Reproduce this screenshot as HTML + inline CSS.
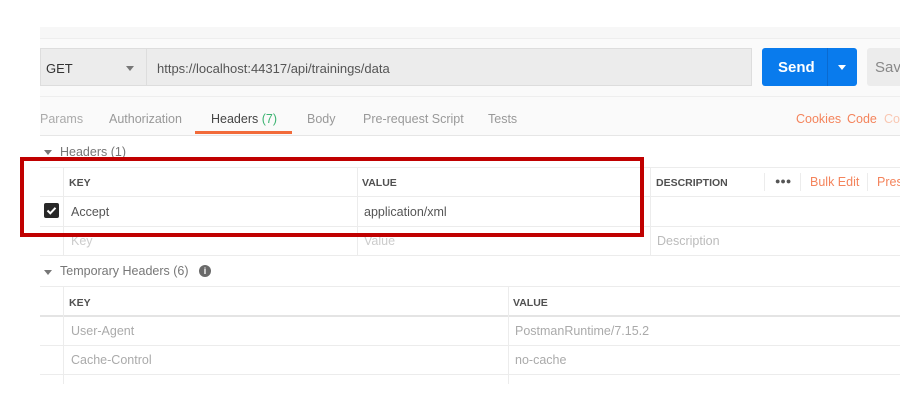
<!DOCTYPE html>
<html><head><meta charset="utf-8"><style>
*{margin:0;padding:0;box-sizing:border-box}
body{width:900px;height:408px;overflow:hidden;background:#fff;font-family:"Liberation Sans",sans-serif;position:relative}
.a{position:absolute;white-space:nowrap}
.t{font-size:12.5px;color:#888}
.hl{position:absolute;height:1px;background:#ececec}
.vl{position:absolute;width:1px;background:#ececec}
.h{font-size:10.5px;font-weight:bold;color:#505050}
</style></head><body>
<div class="a" style="left:40px;top:27px;width:860px;height:11px;background:#f7f7f7"></div>
<div class="a" style="left:40px;top:38px;width:860px;height:58px;background:#fafafa;border-top:1px solid #eee"></div>
<div class="a" style="left:40px;top:48px;width:106px;height:38px;background:#ececec;border:1px solid #ddd;border-right:none"></div>
<div class="a" style="left:46px;top:61px;font-size:13px;color:#333">GET</div>
<div class="a" style="left:126px;top:66px;width:0;height:0;border-left:4px solid transparent;border-right:4px solid transparent;border-top:5px solid #777"></div>
<div class="a" style="left:146px;top:48px;width:606px;height:38px;background:#ececec;border:1px solid #ddd"></div>
<div class="a" style="left:157px;top:61px;font-size:13px;color:#555">https://localhost:44317/api/trainings/data</div>
<div class="a" style="left:762px;top:48px;width:95px;height:38px;background:#097bed;border-radius:3px"></div>
<div class="a" style="left:827px;top:48px;width:1px;height:38px;background:#0a6ad0"></div>
<div class="a" style="left:778px;top:59px;font-size:15px;color:#fff;font-weight:600">Send</div>
<div class="a" style="left:838px;top:65px;width:0;height:0;border-left:4px solid transparent;border-right:4px solid transparent;border-top:5px solid #fff"></div>
<div class="a" style="left:867px;top:48px;width:40px;height:38px;background:#ececec;border-radius:3px"></div>
<div class="a" style="left:875px;top:59px;font-size:15px;color:#888">Save</div>
<div class="a" style="left:40px;top:96px;width:860px;height:40px;background:#fafafa;border-top:1px solid #eee;border-bottom:1px solid #e6e6e6"></div>
<div class="a t" style="left:40px;top:112px;color:#aaa">Params</div>
<div class="a t" style="left:109px;top:112px;color:#999">Authorization</div>
<div class="a t" style="left:211px;top:112px;color:#444">Headers <span style="color:#3cb371">(7)</span></div>
<div class="a" style="left:195px;top:131px;width:97px;height:3px;background:#f26b3a"></div>
<div class="a t" style="left:307px;top:112px;color:#999">Body</div>
<div class="a t" style="left:363px;top:112px;color:#999">Pre-request Script</div>
<div class="a t" style="left:488px;top:112px;color:#999">Tests</div>
<div class="a t" style="left:796px;top:112px;color:#f4845c">Cookies</div>
<div class="a t" style="left:847px;top:112px;color:#f4845c">Code</div>
<div class="a t" style="left:884px;top:112px;color:#f9c7b2">Comments</div>
<div class="a" style="left:44px;top:150px;width:0;height:0;border-left:4px solid transparent;border-right:4px solid transparent;border-top:5px solid #777"></div>
<div class="a t" style="left:60px;top:145px;color:#777">Headers (1)</div>
<div class="hl" style="left:40px;top:167px;width:860px"></div>
<div class="hl" style="left:40px;top:196px;width:860px"></div>
<div class="hl" style="left:40px;top:226px;width:860px"></div>
<div class="hl" style="left:40px;top:255px;width:860px"></div>
<div class="vl" style="left:63px;top:167px;height:88px"></div>
<div class="vl" style="left:357px;top:167px;height:88px"></div>
<div class="vl" style="left:650px;top:167px;height:88px"></div>
<div class="vl" style="left:764px;top:173px;height:18px"></div>
<div class="vl" style="left:800px;top:173px;height:18px"></div>
<div class="vl" style="left:867px;top:173px;height:18px"></div>
<div class="a h" style="left:69px;top:177px">KEY</div>
<div class="a h" style="left:362px;top:177px">VALUE</div>
<div class="a h" style="left:656px;top:177px">DESCRIPTION</div>
<div class="a" style="left:775px;top:176px;font-size:9px;color:#555;letter-spacing:0px">●●●</div>
<div class="a t" style="left:810px;top:175px;color:#f4845c">Bulk Edit</div>
<div class="a t" style="left:877px;top:175px;color:#f4845c">Presets</div>
<div class="a" style="left:44px;top:203px;width:15px;height:15px;background:#282828;border-radius:2px"></div>
<svg class="a" style="left:44px;top:203px" width="15" height="15"><path d="M3.5 7.5 L6.3 10.3 L11.5 4.8" stroke="#fff" stroke-width="2" fill="none"/></svg>
<div class="a t" style="left:71px;top:205px;color:#555">Accept</div>
<div class="a t" style="left:364px;top:205px;color:#555">application/xml</div>
<div class="a t" style="left:71px;top:234px;color:#ccc">Key</div>
<div class="a t" style="left:364px;top:234px;color:#ccc">Value</div>
<div class="a t" style="left:657px;top:234px;color:#bbb">Description</div>
<div class="a" style="left:20px;top:157px;width:624px;height:80px;border:4px solid #c00000"></div>
<div class="a" style="left:44px;top:270px;width:0;height:0;border-left:4px solid transparent;border-right:4px solid transparent;border-top:5px solid #777"></div>
<div class="a t" style="left:60px;top:264px;color:#777">Temporary Headers (6)</div>
<div class="a" style="left:199px;top:265px;width:12px;height:12px;border-radius:50%;background:#6a6a6a;color:#fff;font-size:9px;font-weight:bold;text-align:center;line-height:12px">i</div>
<div class="hl" style="left:40px;top:286px;width:860px"></div>
<div class="hl" style="left:40px;top:315px;width:860px;background:#e4e4e4;height:2px"></div>
<div class="hl" style="left:40px;top:345px;width:860px"></div>
<div class="hl" style="left:40px;top:374px;width:860px"></div>
<div class="vl" style="left:63px;top:287px;height:97px"></div>
<div class="vl" style="left:508px;top:287px;height:97px"></div>
<div class="a h" style="left:69px;top:297px">KEY</div>
<div class="a h" style="left:513px;top:297px">VALUE</div>
<div class="a t" style="left:71px;top:324px;color:#aaa">User-Agent</div>
<div class="a t" style="left:515px;top:324px;color:#aaa">PostmanRuntime/7.15.2</div>
<div class="a t" style="left:71px;top:353px;color:#aaa">Cache-Control</div>
<div class="a t" style="left:515px;top:353px;color:#aaa">no-cache</div>
</body></html>
